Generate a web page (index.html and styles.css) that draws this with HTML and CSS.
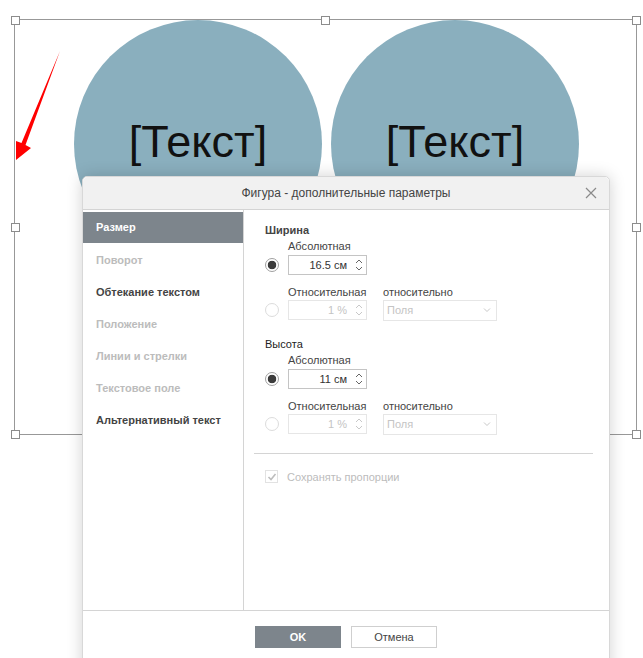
FILE: index.html
```html
<!DOCTYPE html>
<html lang="ru">
<head>
  <meta charset="UTF-8">
  <meta name="viewport" content="width=device-width, initial-scale=1.0">
  <title>Фигура - дополнительные параметры</title>
  <link rel="stylesheet" href="styles.css">
</head>
<body>

  <!-- холст документа с выделенной группой фигур -->
  <div class="canvas">
    <div class="frame">
      <span class="handle h-tl"></span>
      <span class="handle h-tc"></span>
      <span class="handle h-tr"></span>
      <span class="handle h-ml"></span>
      <span class="handle h-mr"></span>
      <span class="handle h-bl"></span>
      <span class="handle h-bc"></span>
      <span class="handle h-br"></span>
    </div>
    <div class="circle c1"><span>[Текст]</span></div>
    <div class="circle c2"><span>[Текст]</span></div>
    <svg class="arrow" width="70" height="170" viewBox="0 0 70 170">
      <polygon points="60,51 25.5,145 31,148 16,160 16,141 21.5,143" fill="#ff0000"/>
    </svg>
  </div>

  <div class="dialog">
    <div class="dlg-header">
      <span class="dlg-title">Фигура - дополнительные параметры</span>
      <svg class="dlg-close" width="12" height="12" viewBox="0 0 12 12">
        <path d="M1 1 L11 11 M11 1 L1 11" stroke="#8a8a8a" stroke-width="1.2" fill="none"/>
      </svg>
    </div>

    <div class="dlg-body">
      <ul class="menu">
        <li class="active">Размер</li>
        <li class="off">Поворот</li>
        <li>Обтекание текстом</li>
        <li class="off">Положение</li>
        <li class="off">Линии и стрелки</li>
        <li class="off">Текстовое поле</li>
        <li>Альтернативный текст</li>
      </ul>

      <div class="panel">
        <div class="sec-title">Ширина</div>
        <div class="sub-label">Абсолютная</div>
        <div class="field-row">
          <span class="radio checked"></span>
          <div class="spin">
            <span>16.5 см</span>
            <svg class="arrows" width="8" height="16" viewBox="0 0 8 16">
              <path d="M1 6 L4 3 L7 6 M1 10 L4 13 L7 10" stroke="#666" stroke-width="1" fill="none"/>
            </svg>
          </div>
        </div>
        <div class="rel-labels">
          <span class="rel-a">Относительная</span>
          <span>относительно</span>
        </div>
        <div class="field-row rel-row">
          <span class="radio"></span>
          <div class="spin disabled">
            <span>1 %</span>
            <svg class="arrows" width="8" height="16" viewBox="0 0 8 16">
              <path d="M1 6 L4 3 L7 6 M1 10 L4 13 L7 10" stroke="#c8c8c8" stroke-width="1" fill="none"/>
            </svg>
          </div>
          <div class="combo">
            <span>Поля</span>
            <svg width="8" height="6" viewBox="0 0 8 6">
              <path d="M1 1.5 L4 4.5 L7 1.5" stroke="#c8c8c8" stroke-width="1" fill="none"/>
            </svg>
          </div>
        </div>

        <div class="sec-title second">Высота</div>
        <div class="sub-label">Абсолютная</div>
        <div class="field-row">
          <span class="radio checked"></span>
          <div class="spin">
            <span>11 см</span>
            <svg class="arrows" width="8" height="16" viewBox="0 0 8 16">
              <path d="M1 6 L4 3 L7 6 M1 10 L4 13 L7 10" stroke="#666" stroke-width="1" fill="none"/>
            </svg>
          </div>
        </div>
        <div class="rel-labels">
          <span class="rel-a">Относительная</span>
          <span>относительно</span>
        </div>
        <div class="field-row rel-row">
          <span class="radio"></span>
          <div class="spin disabled">
            <span>1 %</span>
            <svg class="arrows" width="8" height="16" viewBox="0 0 8 16">
              <path d="M1 6 L4 3 L7 6 M1 10 L4 13 L7 10" stroke="#c8c8c8" stroke-width="1" fill="none"/>
            </svg>
          </div>
          <div class="combo">
            <span>Поля</span>
            <svg width="8" height="6" viewBox="0 0 8 6">
              <path d="M1 1.5 L4 4.5 L7 1.5" stroke="#c8c8c8" stroke-width="1" fill="none"/>
            </svg>
          </div>
        </div>

        <div class="divider"></div>

        <label class="check">
          <span class="box">
            <svg width="10" height="10" viewBox="0 0 10 10">
              <path d="M1.5 5 L4 7.5 L8.5 2" stroke="#bdbdbd" stroke-width="1.6" fill="none"/>
            </svg>
          </span>
          Сохранять пропорции
        </label>
      </div>
    </div>

    <div class="dlg-footer">
      <button class="btn primary">OK</button>
      <button class="btn">Отмена</button>
    </div>
  </div>

</body>
</html>
```

FILE: styles.css
```css
body {
  margin: 0;
  padding: 0;
  background: #fff;
  font-family: 'Liberation Sans', Arial, sans-serif;
  font-size: 11px;
  color: #444;
  overflow: hidden;
}

/* холст */
.canvas {
  position: relative;
  width: 643px;
  height: 658px;
}

.frame {
  position: absolute;
  left: 14px;
  top: 19px;
  width: 623px;
  height: 416px;
  border: 1px solid #989898;
  box-sizing: border-box;
}

.handle {
  position: absolute;
  width: 7px;
  height: 7px;
  background: #fff;
  border: 1px solid #8c8c8c;
  margin: -4.5px 0 0 -4.5px;
}

.h-tl { left: 0; top: 0; }
.h-tc { left: 50%; top: 0; }
.h-tr { left: 100%; top: 0; }
.h-ml { left: 0; top: 50%; }
.h-mr { left: 100%; top: 50%; }
.h-bl { left: 0; top: 100%; }
.h-bc { left: 50%; top: 100%; }
.h-br { left: 100%; top: 100%; }

.circle {
  position: absolute;
  top: 20px;
  width: 248px;
  height: 248px;
  border-radius: 50%;
  background: #8aafbe;
  display: flex;
  justify-content: center;
  align-items: center;
}

.circle span {
  font-size: 45px;
  color: #111;
  padding-bottom: 4px;
}

.c1 { left: 74px; }
.c2 { left: 331px; }

.arrow {
  position: absolute;
  left: 0;
  top: 0;
}

/* окно параметров */
.dialog {
  position: absolute;
  left: 82px;
  top: 176px;
  width: 528px;
  height: 500px;
  background: #fff;
  border: 1px solid #d8d8d8;
  border-radius: 5px 5px 0 0;
  box-sizing: border-box;
  box-shadow: 0 0 16px rgba(0, 0, 0, 0.18);
}

.dlg-header {
  position: relative;
  height: 32px;
  background: #f1f1f1;
  border-bottom: 1px solid #d4d4d4;
  border-radius: 5px 5px 0 0;
  display: flex;
  justify-content: center;
  align-items: center;
}

.dlg-title {
  font-size: 12px;
  color: #444;
}

.dlg-close {
  position: absolute;
  right: 12px;
  top: 10px;
}

.dlg-body {
  display: flex;
  height: 400px;
  border-bottom: 1px solid #d4d4d4;
}

.menu {
  list-style: none;
  margin: 0;
  padding: 2px 0 0;
  width: 160px;
  border-right: 1px solid #d4d4d4;
}

.menu li {
  height: 32px;
  line-height: 32px;
  padding-left: 13px;
  font-weight: bold;
  color: #444;
}

.menu li.active {
  height: 31px;
  line-height: 31px;
  margin-bottom: 1px;
  background: #7d858c;
  color: #fff;
}

.menu li.off {
  color: #bcbcbc;
}

.panel {
  flex: 1;
  padding: 13px 0 0 21px;
}

.sec-title {
  font-weight: bold;
  line-height: 14px;
  color: #444;
}

.sec-title.second {
  margin-top: 17px;
  font-weight: normal;
  color: #222;
}

.sub-label {
  margin: 2px 0 0 23px;
  line-height: 14px;
}

.field-row {
  display: flex;
  align-items: center;
  margin-top: 2px;
  height: 20px;
}

.rel-row {
  margin-top: 1px;
}

.radio {
  width: 12px;
  height: 12px;
  border: 1px solid #dcdcdc;
  border-radius: 50%;
  margin-right: 9px;
  background: #fff;
}

.radio.checked {
  border-color: #a0a0a0;
  background: radial-gradient(circle, #3c3c3c 4px, #fff 4.6px);
}

.spin {
  width: 79px;
  height: 20px;
  border: 1px solid #c4c4c4;
  box-sizing: border-box;
  display: flex;
  align-items: center;
  justify-content: flex-end;
  padding-right: 3px;
  color: #333;
}

.spin .arrows {
  margin-left: 8px;
}

.spin.disabled {
  border-color: #e6e6e6;
  color: #c4c4c4;
}

.combo {
  margin-left: 16px;
  width: 114px;
  height: 21px;
  border: 1px solid #e6e6e6;
  box-sizing: border-box;
  display: flex;
  align-items: center;
  justify-content: space-between;
  padding: 0 5px 0 3px;
  color: #c4c4c4;
}

.rel-labels {
  display: flex;
  margin: 10px 0 0 23px;
  line-height: 14px;
}

.rel-a {
  width: 95px;
}

.divider {
  margin: 19px 16px 0 -11px;
  border-top: 1px solid #d4d4d4;
}

.check {
  display: flex;
  align-items: center;
  margin-top: 16px;
  color: #bcbcbc;
}

.check .box {
  width: 11px;
  height: 11px;
  border: 1px solid #e2e2e2;
  margin-right: 9px;
  display: flex;
  align-items: center;
  justify-content: center;
}

.dlg-footer {
  display: flex;
  justify-content: center;
  gap: 10px;
  padding-top: 15px;
}

.btn {
  width: 86px;
  height: 22px;
  border: 1px solid #cfcfcf;
  background: #fff;
  font-family: 'Liberation Sans', Arial, sans-serif;
  font-size: 11px;
  color: #444;
  padding: 0;
}

.btn.primary {
  background: #7d858c;
  border-color: #7d858c;
  color: #fff;
  font-weight: bold;
}
```
